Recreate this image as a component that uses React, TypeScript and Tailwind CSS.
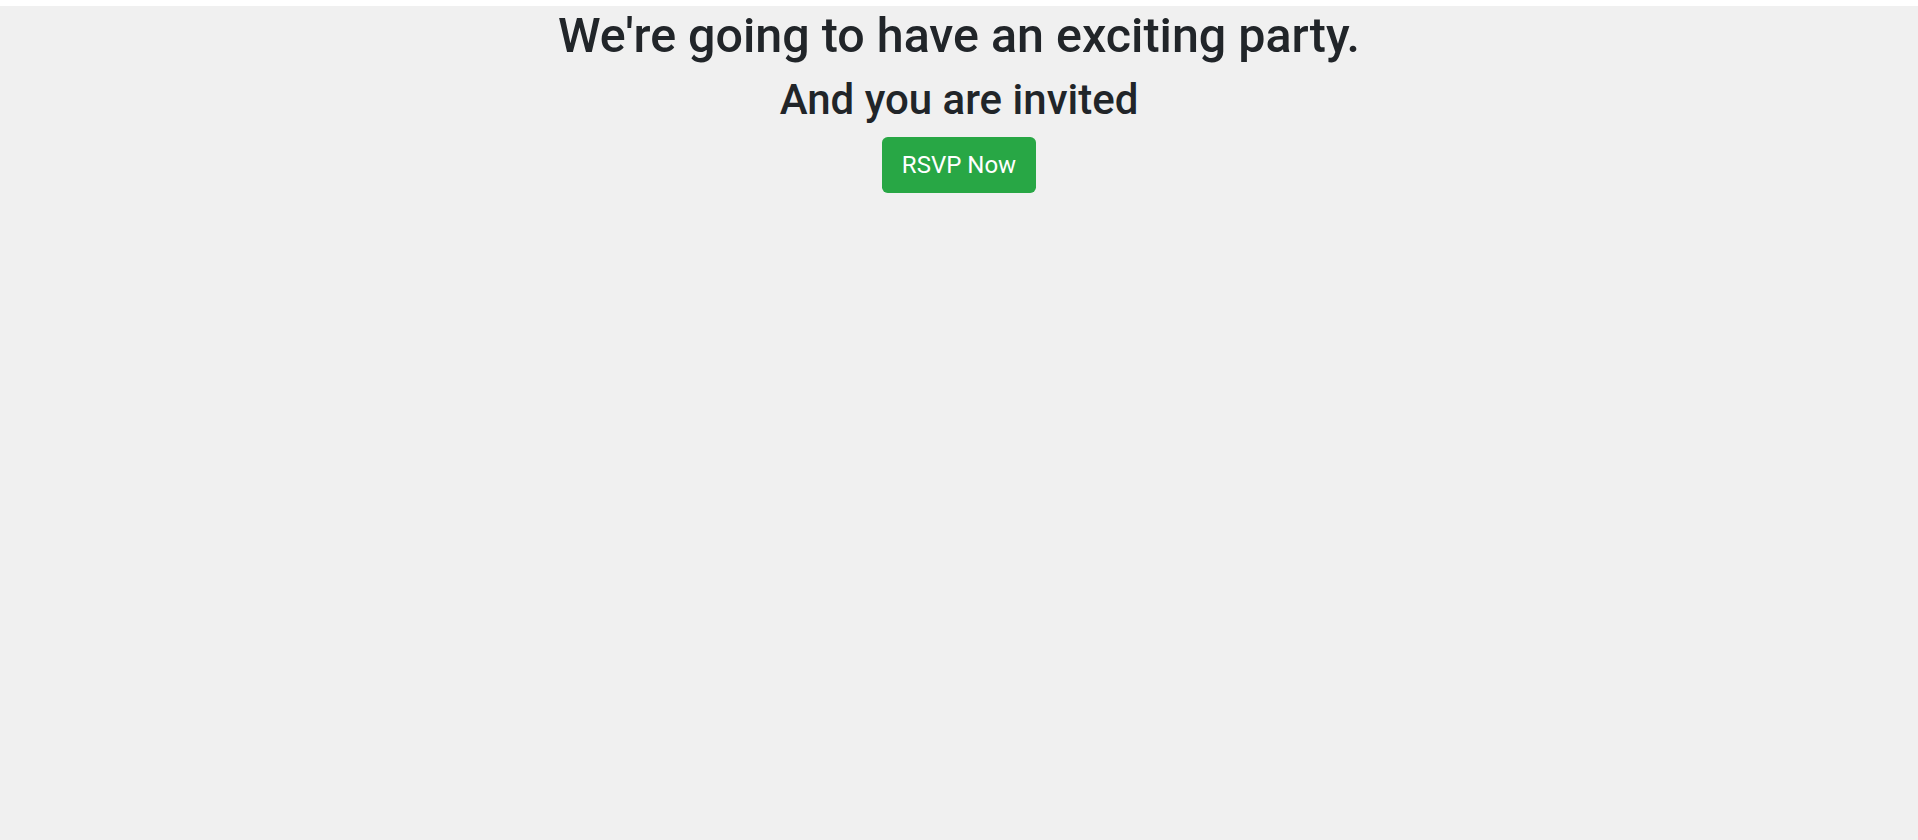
export default function App() {
  return (
    <main
      className="min-h-screen bg-white pt-[6px]"
      style={{ fontFamily: "Roboto, 'Liberation Sans', sans-serif" }}
    >
      <section className="min-h-[834px] bg-[#f0f0f0] text-center text-[#212529]">
        {/* headline block */}
        <h1 className="mb-[10.6px] pt-[1px] text-[48.4px] font-medium leading-[57.6px]">
          We're going to have an exciting party.
        </h1>
        <h2 className="mb-[9.6px] text-[42px] font-medium leading-[50px]">
          And you are invited
        </h2>
        <div className="pt-[2px]">
          <button
            type="button"
            className="rounded-[5.76px] bg-[#28a745] px-[20px] py-[10px] text-[24px] leading-[36px] text-white"
          >
            RSVP Now
          </button>
        </div>
      </section>
    </main>
  );
}
